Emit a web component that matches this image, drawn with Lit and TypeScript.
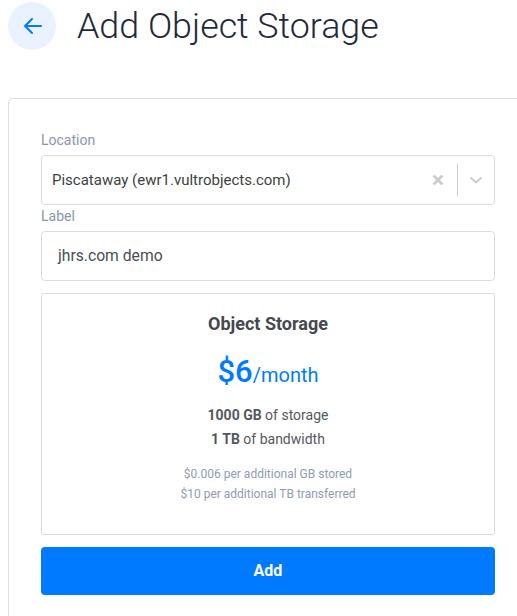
import { LitElement, html, css } from "lit";
import { customElement } from "lit/decorators.js";

@customElement("app-root")
export class AppRoot extends LitElement {
  static styles = css`
    :host { display: block; width: 517px; height: 616px; overflow: hidden; background: #fff; font-family: Roboto, "Liberation Sans", sans-serif; color: #3c4043; }
    .head { display: flex; align-items: center; gap: 21px; padding: 2px 0 0 8px; height: 48px; }
    .back { width: 48px; height: 48px; border-radius: 50%; background: #ebf2ff; display: flex; align-items: center; justify-content: center; flex: none; }
    h1 { margin: 0; font-size: 35.8px; font-weight: 300; line-height: 48px; color: #1e2a3c; white-space: nowrap; }
    .card { box-sizing: border-box; margin: 48px 0 0 8px; width: 540px; height: 560px; border: 1px solid #dedede; border-radius: 4px 0 0 0; padding: 32px; }
    .col { width: 454px; display: flex; flex-direction: column; }
    .lab { font-size: 14px; line-height: 18px; color: #8b95ad; }
    .lab.first { margin-bottom: 6px; }
    .lab.second { margin: 2px 0 6px; line-height: 18px; }
    .select { box-sizing: border-box; height: 50px; border: 1px solid #dcdcdc; border-radius: 4px; display: flex; align-items: center; padding: 0 9px 0 10px; font-size: 15px; color: #3d3f42; }
    .value { flex: 1; white-space: nowrap; }
    .icons { display: flex; align-items: center; }
    .x { width: 20px; height: 20px; display: block; }
    .sep { width: 1px; height: 32px; background: #ccc; margin: 0 10px 0 9px; }
    .chev { width: 16px; height: 16px; display: block; margin-right: 1px; }
    .input { box-sizing: border-box; height: 50px; border: 1px solid #dcdcdc; border-radius: 4px; display: flex; align-items: center; padding: 0 16px 2px; font-size: 15.7px; color: #4a4d52; }
    .plan { box-sizing: border-box; height: 242px; margin-top: 12px; border: 1px solid #dcdcdc; border-radius: 2px; display: flex; flex-direction: column; align-items: center; padding-top: 19px; }
    .name { font-size: 18px; font-weight: 700; line-height: 22px; color: #45484d; }
    .price { margin-top: 17px; color: #007bff; font-size: 20px; line-height: 40px; display: flex; align-items: baseline; }
    .price b { font-size: 31px; font-weight: 500; }
    .spec { margin-top: 8px; font-size: 14px; line-height: 24px; color: #55585d; text-align: center; }
    .spec b { font-weight: 700; }
    .fine { margin-top: 13px; font-size: 12px; line-height: 20px; color: #8f9bb3; text-align: center; }
    .add { box-sizing: border-box; height: 48px; margin-top: 12px; padding-bottom: 2px; background: #007bff; border-radius: 4px; color: #fff; font-size: 16px; font-weight: 700; display: flex; align-items: center; justify-content: center; }
  `;

  render() {
    return html`
      <div class="head">
        <div class="back">
          <svg width="20" height="20" viewBox="0 0 20 20" fill="none" stroke="#007bff" stroke-width="2" stroke-linecap="round" stroke-linejoin="round"><path d="M19 10H3M10 3l-7 7 7 7"/></svg>
        </div>
        <h1>Add Object Storage</h1>
      </div>
      <div class="card">
        <div class="col">
          <div class="lab first">Location</div>
          <div class="select">
            <span class="value">Piscataway (ewr1.vultrobjects.com)</span>
            <div class="icons">
              <svg class="x" viewBox="0 0 20 20" fill="none" stroke="#ccc" stroke-width="2.8"><path d="M5.5 5.5l9 9M14.5 5.5l-9 9"/></svg>
              <div class="sep"></div>
              <svg class="chev" viewBox="0 0 16 16" fill="none" stroke="#ccc" stroke-width="2"><path d="M2.5 5.5L8 10.5l5.5-5"/></svg>
            </div>
          </div>
          <div class="lab second">Label</div>
          <div class="input">jhrs.com demo</div>
          <div class="plan">
            <div class="name">Object Storage</div>
            <div class="price"><b>$6</b><span>/month</span></div>
            <div class="spec"><div><b>1000 GB</b> of storage</div><div><b>1 TB</b> of bandwidth</div></div>
            <div class="fine"><div>$0.006 per additional GB stored</div><div>$10 per additional TB transferred</div></div>
          </div>
          <div class="add">Add</div>
        </div>
      </div>
    `;
  }
}
